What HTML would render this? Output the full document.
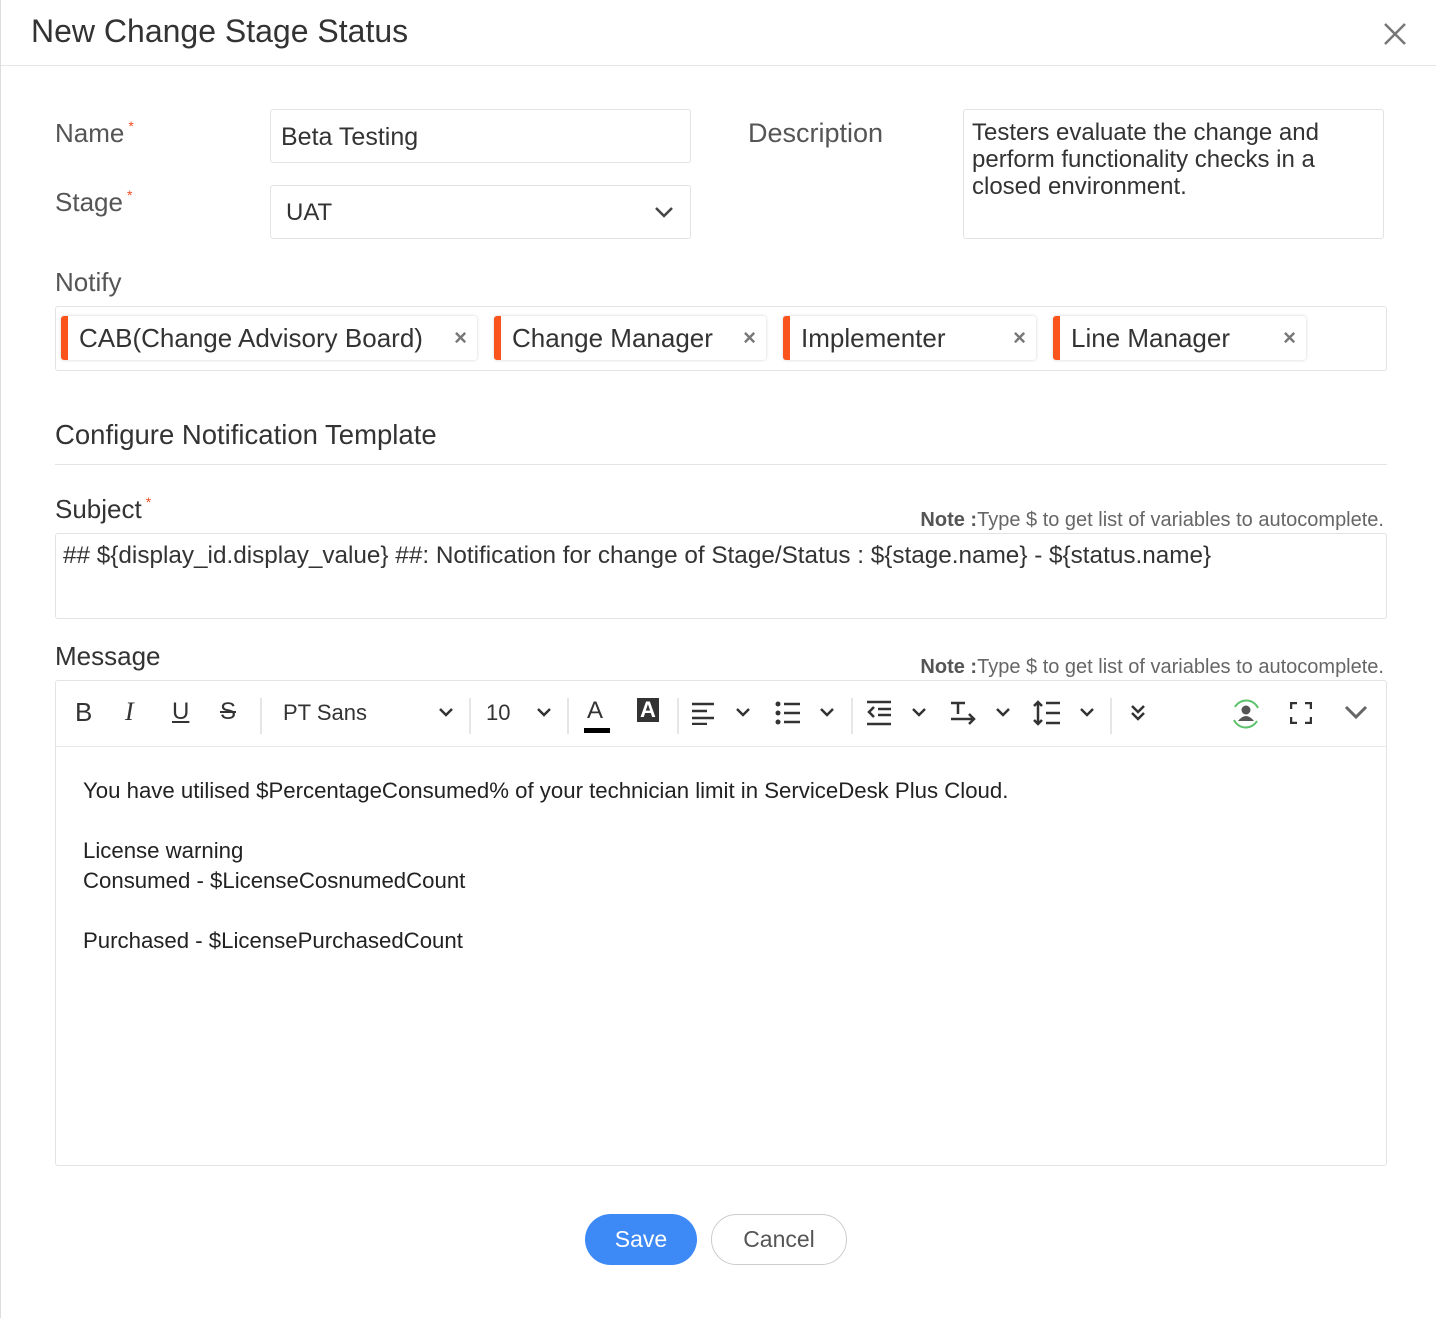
<!DOCTYPE html>
<html><head><style>
*{box-sizing:border-box;margin:0;padding:0}
body{width:1436px;height:1318px;background:#fff;font-family:"Liberation Sans",sans-serif;color:#333;position:relative;overflow:hidden;border-left:1px solid #ddd}
.a{position:absolute}
.lbl{font-size:26px;color:#555}
.req{color:#f04e23;font-size:14px;vertical-align:top;margin-left:4px}
.box{position:absolute;border:1px solid #e3e3e3;border-radius:3px;background:#fff}
.chip{position:absolute;top:316px;height:44px;background:#fff;border-radius:3px;box-shadow:0 0 3px rgba(0,0,0,.18);border-left:7px solid #fa541c;font-size:26px;color:#333;line-height:44px;padding-left:11px}
.chip .x{position:absolute;right:10px;top:0;color:#777;font-size:22px;font-weight:bold}
.note{font-size:20px;color:#666}
.note b{color:#555}
.tb{position:absolute;top:698px;font-size:22px;color:#333}
.sep{position:absolute;top:698px;width:2px;height:36px;background:#e6e6e6}
.chev{position:absolute;top:704px}
</style></head><body>
<div class="a" style="left:30px;top:13px;font-size:32px;color:#333">New Change Stage Status</div>
<svg class="a" style="left:1382px;top:22px" width="24" height="24"><path d="M2 2L22 22M22 2L2 22" stroke="#777" stroke-width="2.5"/></svg>
<div class="a" style="left:0;top:65px;width:1436px;height:1px;background:#e6e6e6"></div>

<div class="a lbl" style="left:54px;top:118px">Name<span class="req">*</span></div>
<div class="box" style="left:269px;top:109px;width:421px;height:54px"><span class="a" style="left:10px;top:13px;font-size:25px;color:#333">Beta Testing</span></div>
<div class="a lbl" style="left:54px;top:187px">Stage<span class="req">*</span></div>
<div class="box" style="left:269px;top:185px;width:421px;height:54px"><span class="a" style="left:15px;top:13px;font-size:24px;color:#333">UAT</span>
<svg class="a" style="left:382px;top:18px" width="22" height="16"><path d="M3 4L11 12L19 4" stroke="#444" stroke-width="2.5" fill="none"/></svg></div>
<div class="a lbl" style="left:747px;top:118px;font-size:27px">Description</div>
<div class="box" style="left:962px;top:109px;width:421px;height:130px"><div class="a" style="left:8px;top:9px;font-size:24px;line-height:27px;color:#333;width:410px">Testers evaluate the change and perform functionality checks in a closed environment.</div></div>

<div class="a lbl" style="left:54px;top:267px">Notify</div>
<div class="box" style="left:54px;top:306px;width:1332px;height:65px"></div>
<div class="chip" style="left:60px;width:416px">CAB(Change Advisory Board)<span class="x">×</span></div>
<div class="chip" style="left:493px;width:272px">Change Manager<span class="x">×</span></div>
<div class="chip" style="left:782px;width:253px">Implementer<span class="x">×</span></div>
<div class="chip" style="left:1052px;width:253px">Line Manager<span class="x">×</span></div>

<div class="a" style="left:54px;top:419px;font-size:27.5px;color:#333">Configure Notification Template</div>
<div class="a" style="left:54px;top:464px;width:1332px;height:1px;background:#e3e3e3"></div>

<div class="a" style="left:54px;top:494px;font-size:26px;color:#333">Subject<span class="req">*</span></div>
<div class="a note" style="right:52px;top:509px"><b>Note :</b>Type $ to get list of variables to autocomplete.</div>
<div class="box" style="left:54px;top:533px;width:1332px;height:86px"><div class="a" style="left:7px;top:8px;font-size:24.3px;color:#333;white-space:nowrap">## ${display_id.display_value} ##: Notification for change of Stage/Status : ${stage.name} - ${status.name}</div></div>

<div class="a" style="left:54px;top:641px;font-size:26px;color:#333">Message</div>
<div class="a note" style="right:52px;top:656px"><b>Note :</b>Type $ to get list of variables to autocomplete.</div>
<div class="box" style="left:54px;top:680px;width:1332px;height:486px"></div>
<div class="a" style="left:55px;top:746px;width:1330px;height:1px;background:#e8e8e8"></div>

<div class="tb" style="left:74px;font-size:26px;top:697px">B</div>
<div class="tb" style="left:124px;font-size:26px;font-style:italic;font-family:'Liberation Serif',serif;top:697px">I</div>
<div class="tb" style="left:171px;font-size:24px;text-decoration:underline">U</div>
<div class="tb" style="left:219px;font-size:24px;text-decoration:line-through">S</div>
<div class="sep" style="left:259px"></div>
<div class="tb" style="left:282px;top:700px">PT Sans</div>
<svg class="chev" style="left:437px" width="16" height="16"><path d="M2 5L8 11L14 5" stroke="#333" stroke-width="2.5" fill="none"/></svg>
<div class="sep" style="left:468px"></div>
<div class="tb" style="left:485px;top:700px">10</div>
<svg class="chev" style="left:535px" width="16" height="16"><path d="M2 5L8 11L14 5" stroke="#333" stroke-width="2.5" fill="none"/></svg>
<div class="sep" style="left:566px"></div>
<div class="tb" style="left:586px;top:697px;font-size:24px">A</div>
<div class="a" style="left:583px;top:728px;width:26px;height:5px;background:#000"></div>
<div class="a" style="left:636px;top:698px;width:22px;height:24px;background:#333;color:#fff;font-size:22px;text-align:center;line-height:24px;font-weight:bold">A</div>
<div class="sep" style="left:676px"></div>
<svg class="a" style="left:690px;top:701px" width="26" height="24"><path d="M1 3H23M1 10H16M1 17H23M1 23H16" stroke="#333" stroke-width="2.5"/></svg>
<svg class="chev" style="left:734px" width="16" height="16"><path d="M2 5L8 11L14 5" stroke="#333" stroke-width="2.5" fill="none"/></svg>
<svg class="a" style="left:774px;top:701px" width="26" height="24"><circle cx="3" cy="3" r="2.5" fill="#333"/><circle cx="3" cy="12" r="2.5" fill="#333"/><circle cx="3" cy="21" r="2.5" fill="#333"/><path d="M9 3H25M9 12H25M9 21H25" stroke="#333" stroke-width="2.5"/></svg>
<svg class="chev" style="left:818px" width="16" height="16"><path d="M2 5L8 11L14 5" stroke="#333" stroke-width="2.5" fill="none"/></svg>
<div class="sep" style="left:850px"></div>
<svg class="a" style="left:865px;top:700px" width="26" height="26"><path d="M1 2H25M12 9H25M12 15H25M1 24H25M8 7L3 12L8 17" stroke="#333" stroke-width="2.5" fill="none"/></svg>
<svg class="chev" style="left:910px" width="16" height="16"><path d="M2 5L8 11L14 5" stroke="#333" stroke-width="2.5" fill="none"/></svg>
<svg class="a" style="left:948px;top:700px" width="28" height="26"><path d="M2 3H16M9 3V14M2 19H25M20 14L25 19L20 24" stroke="#333" stroke-width="2.5" fill="none"/></svg>
<svg class="chev" style="left:994px" width="16" height="16"><path d="M2 5L8 11L14 5" stroke="#333" stroke-width="2.5" fill="none"/></svg>
<svg class="a" style="left:1032px;top:700px" width="28" height="26"><path d="M5 2V24M1 6L5 2L9 6M1 20L5 24L9 20M13 3H27M13 13H27M13 23H27" stroke="#333" stroke-width="2.5" fill="none"/></svg>
<svg class="chev" style="left:1078px" width="16" height="16"><path d="M2 5L8 11L14 5" stroke="#333" stroke-width="2.5" fill="none"/></svg>
<div class="sep" style="left:1109px"></div>
<svg class="a" style="left:1128px;top:703px" width="18" height="20"><path d="M3 3L9 9L15 3M3 10L9 16L15 10" stroke="#333" stroke-width="2.5" fill="none"/></svg>
<svg class="a" style="left:1228px;top:697px" width="34" height="34"><path d="M6 10A13 13 0 0 1 29 11M28 24A13 13 0 0 1 5 23" stroke="#5cc26b" stroke-width="2" fill="none"/><circle cx="17" cy="13" r="4.5" fill="#555"/><path d="M9 24Q17 14 25 24Z" fill="#555"/></svg>
<svg class="a" style="left:1289px;top:702px" width="22" height="22"><path d="M1 7V1H7M15 1H21V7M21 15V21H15M7 21H1V15" stroke="#333" stroke-width="2.5" fill="none"/></svg>
<svg class="a" style="left:1343px;top:703px" width="24" height="18"><path d="M2 4L12 14L22 4" stroke="#666" stroke-width="3" fill="none"/></svg>

<div class="a" style="left:82px;top:776px;font-size:22.2px;line-height:30px;color:#222">You have utilised $PercentageConsumed% of your technician limit in ServiceDesk Plus Cloud.<br><br>License warning<br>Consumed - $LicenseCosnumedCount<br><br>Purchased - $LicensePurchasedCount</div>

<div class="a" style="left:584px;top:1214px;width:112px;height:51px;border-radius:26px;background:#3d8af7;color:#fff;font-size:23px;text-align:center;line-height:51px">Save</div>
<div class="a" style="left:710px;top:1214px;width:136px;height:51px;border-radius:26px;background:#fff;border:1px solid #ccc;color:#555;font-size:23px;text-align:center;line-height:49px">Cancel</div>
</body></html>
